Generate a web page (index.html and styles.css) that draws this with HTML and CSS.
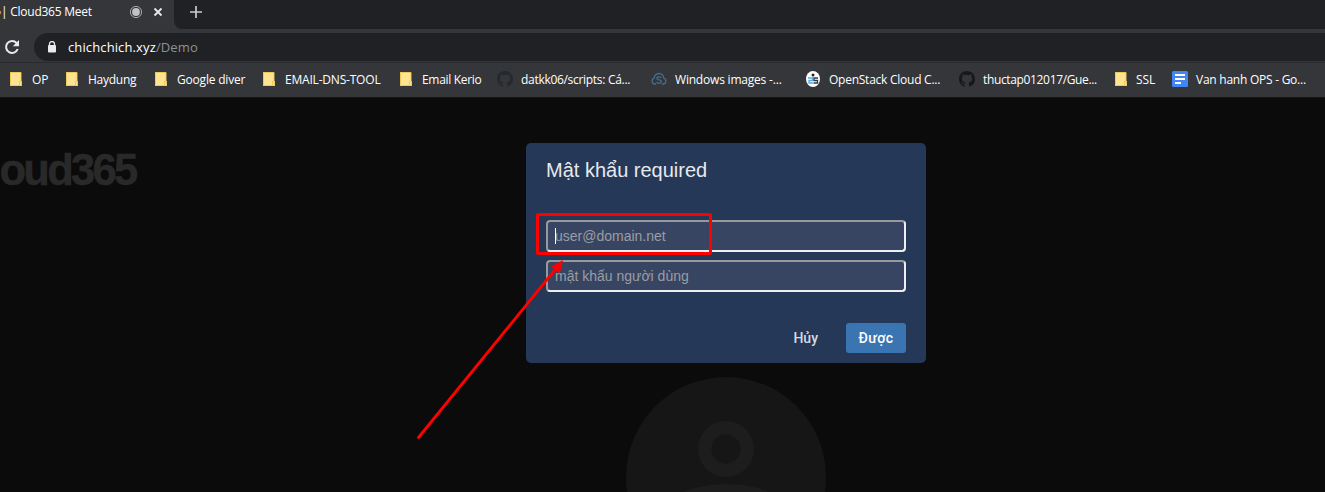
FILE: index.html
```html
<!DOCTYPE html>
<html lang="vi">
<head>
<meta charset="utf-8">
<title>Cloud365 Meet</title>
<link rel="stylesheet" href="styles.css">
</head>
<body>
<svg class="defs" width="0" height="0">
  <symbol id="folder" viewBox="0 0 16 16"><path d="M2 1h11v9h1v5H2z" fill="#fee391"/><path d="M2.500 1v13.500H11M2 1.500h11V10M11.500 14.500v-4h2v4z" fill="none" stroke="#eec859"/></symbol>
  <symbol id="github" viewBox="0 0 16 16"><path d="M8 0C3.580 0 0 3.580 0 8c0 3.540 2.290 6.530 5.470 7.590.4.070.550-.170.550-.380v-1.490c-2.010.370-2.530-.490-2.690-.940-.090-.230-.480-.940-.820-1.130-.280-.150-.680-.520-.010-.530.630-.010 1.080.580 1.230.820.720 1.210 1.870.870 2.330.660.070-.520.280-.870.510-1.070-1.780-.2-3.640-.890-3.640-3.950 0-.870.310-1.590.820-2.150-.080-.2-.360-1.020.080-2.120 0 0 .670-.210 2.200.820a7.600 7.600 0 0 1 4 0c1.530-1.040 2.200-.820 2.200-.820.440 1.100.160 1.920.080 2.120.510.560.820 1.270.820 2.150 0 3.070-1.870 3.750-3.650 3.950.290.250.540.730.540 1.480v2.200c0 .210.150.460.550.380A8 8 0 0 0 16 8c0-4.420-3.580-8-8-8z" fill="currentColor"/></symbol>
</svg>
<header class="browser">
  <div class="tabs">
    <div class="tab">
      <i class="favicon-edge"></i>
      <span class="tab-title">| Cloud365 Meet</span>
      <svg class="rec" width="14" height="14" viewBox="0 0 14 14"><circle cx="7" cy="7" r="5.600" fill="none" stroke="#a7a9ac"/><circle cx="7" cy="7" r="3.900" fill="#c0c2c5"/></svg>
      <svg class="close" width="10" height="10" viewBox="0 0 10 10"><path d="M1.500 1.500l7 7m0-7l-7 7" stroke="#e8eaed" stroke-width="1.800"/></svg>
    </div>
    <div class="tab-rest"><svg width="12" height="12" viewBox="0 0 12 12"><path d="M6 0v12M0 6h12" stroke="#c9cbce" stroke-width="1.700"/></svg></div>
  </div>
  <div class="toolbar">
    <svg class="reload" width="16" height="16" viewBox="0 0 16 16"><path d="M12.600 4A6 6 0 1 0 13.700 10" fill="none" stroke="#e8eaed" stroke-width="2"/><path d="M15 1v6.200H8.800z" fill="#e8eaed"/></svg>
    <div class="address">
      <svg width="10" height="12" viewBox="0 0 10 12"><path d="M2.500 5V3a2.500 2.500 0 0 1 5 0v2" fill="none" stroke="#e8eaed" stroke-width="1.300"/><rect x="1" y="4" width="8" height="7.500" rx="1" fill="#e8eaed"/></svg>
      <span class="url">chichchich.xyz<span class="path">/Demo</span></span>
    </div>
  </div>
  <nav class="bookmarks">
    <a><svg><use href="#folder"/></svg><span>OP</span></a>
    <a><svg><use href="#folder"/></svg><span class="haydung">Haydung</span></a>
    <a><svg><use href="#folder"/></svg><span class="diver">Google diver</span></a>
    <a><svg><use href="#folder"/></svg><span class="email">EMAIL-DNS-TOOL</span></a>
    <a><svg><use href="#folder"/></svg><span class="kerio">Email Kerio</span></a>
    <a><svg class="gh-dim"><use href="#github"/></svg><span class="scripts">datkk06/scripts: Cá...</span></a>
    <a><svg viewBox="0 0 16 16"><path d="M5 13H3.500a3 3 0 0 1-.3-5.800C3.200 4.500 5.500 2.500 8 2.500s4.600 2 4.800 4.700a3 3 0 0 1-.3 5.800H11M10.200 7C9.500 5.300 5.800 5.500 5.800 7.300c0 1.900 4.600 1.200 4.600 3.300S6.500 12.900 5.500 11" fill="none" stroke="#426f91" stroke-width="1.300"/></svg><span class="windows">Windows images -...</span></a>
    <a><svg viewBox="0 0 16 16"><ellipse cx="8" cy="8" rx="7" ry="8" fill="#fff"/><circle cx="8" cy="4" r="1.500" fill="#222"/><path d="M3 7h4.500v2.500H4V12h4" fill="none" stroke="#55a9df" stroke-width="1.300"/><path d="M13 7H9v2.500h3.500V12H8.500" fill="none" stroke="#333b42" stroke-width="1.300"/></svg><span class="openstack">OpenStack Cloud C...</span></a>
    <a><svg class="gh"><use href="#github"/></svg><span class="thuctap">thuctap012017/Gue...</span></a>
    <a><svg class="ssl"><use href="#folder"/></svg><span>SSL</span></a>
    <a><svg viewBox="0 0 16 16"><rect width="16" height="16" rx="1.500" fill="#4285f4"/><path d="M3 4h10M3 8h10M3 12h6" stroke="#fff" stroke-width="1.800"/></svg><span class="vanhanh">Van hanh OPS - Go...</span></a>
  </nav>
</header>
<main class="meet">
  <div class="brand">loud365</div>
  <section class="dialog">
    <h1>Mật khẩu required</h1>
    <div class="field"><i class="caret"></i>user@domain.net</div>
    <div class="field">mật khẩu người dùng</div>
    <div class="actions"><span class="cancel">Hủy</span><span class="ok">Được</span></div>
  </section>
  <svg class="avatar" width="200" height="115" viewBox="0 0 200 115"><circle cx="100" cy="100" r="100" fill="#161616"/><circle cx="100" cy="72" r="21.300" fill="none" stroke="#1d1d1d" stroke-width="13.300"/><ellipse cx="100" cy="148" rx="72" ry="41" fill="#1d1d1d"/></svg>
  <svg class="annotation" width="1325" height="394" viewBox="0 98 1325 394"><rect x="537.500" y="214.500" width="173" height="39" rx=".5" fill="none" stroke="#f00" stroke-width="3"/><path d="M418.500 437.500L554 271" stroke="#f00" stroke-width="2.800" stroke-linecap="round"/><path d="M563 260l-3.300 13.500-8.300-7z" fill="#f00"/></svg>
</main>
</body>
</html>
```
FILE: styles.css
```css
* { box-sizing: border-box; }
body { margin: 0; width: 1325px; height: 492px; overflow: hidden; background: #0b0b0b; font-family: "Open Sans", "Noto Sans", sans-serif; }
svg { display: block; flex: none; }
.defs { position: absolute; }
.browser { height: 98px; background: #35363a; border-bottom: 1px solid #151517; }
.tabs { display: flex; height: 29px; background: #35363a; }
.tab { display: flex; align-items: center; width: 174px; height: 29px; padding: 0 0 5px; color: #fff; font-size: 12px; }
.favicon-edge { width: 1px; height: 3px; background: #ef7c2d; }
.tab-title { width: 128px; padding-bottom: 1px; letter-spacing: -.25px; white-space: nowrap; }
.close { margin-left: 10px; }
.tab-rest { flex: 1; padding: 6px 0 0 16px; background: #202124; border-bottom-left-radius: 8px; }
.toolbar { display: flex; align-items: center; height: 36px; padding: 0 0 1px 4px; gap: 14px; }
.address { display: flex; align-items: center; flex: 1; height: 28px; padding-left: 13px; gap: 11px; background: #202124; border-radius: 14px 0 0 14px; }
.url { color: #fff; font-size: 13px; letter-spacing: .12px; }
.path { color: #8d9194; }
.bookmarks { display: grid; grid-template-columns: 56px 89px 108px 137px 99px 154px 154px 154px 153px 60px 145px; height: 33px; margin-top: -3px; padding: 0 0 0 8px; border-top: 1px solid #292a2d; }
.bookmarks a { display: flex; align-items: center; gap: 8px; color: #fff; font-size: 12px; white-space: nowrap; letter-spacing: -.1px; }
.bookmarks svg { width: 16px; height: 16px; }
.bookmarks .haydung { letter-spacing: -.25px; }
.bookmarks .diver, .bookmarks .email, .bookmarks .windows { letter-spacing: -.2px; }
.bookmarks .kerio { letter-spacing: -.32px; }
.bookmarks .scripts { letter-spacing: -.3px; }
.bookmarks .vanhanh { letter-spacing: -.25px; }
.bookmarks .openstack { letter-spacing: -.25px; }
.bookmarks .thuctap { letter-spacing: -.35px; }
.bookmarks .ssl { transform: translateX(1px); }
.gh-dim { color: #24292e; }
.gh { color: #17181a; }
.meet { position: relative; display: flex; flex-direction: column; align-items: center; height: 394px; background: #0b0b0b; }
.brand { position: absolute; left: -10px; top: 45px; color: #292929; font: bold 43.500px/54px "Liberation Sans", Arial, sans-serif; letter-spacing: -2.700px; -webkit-text-stroke: .5px #292929; }
.dialog { width: 400px; height: 220px; margin: 45px 0 14px 127px; padding: 15px 20px 10px; border-radius: 5px; background: #253858; font-family: "Liberation Sans", Arial, sans-serif; }
h1 { margin: 0 0 38px; color: #e6e9ee; font-size: 20px; line-height: 24px; font-weight: 400; }
.field { position: relative; height: 32px; margin-bottom: 8px; padding: 0 7px; border: 2px solid; border-color: #999 #eee #eee #999; border-radius: 4px; background: #374562; color: #9a9da3; font-size: 14px; line-height: 28px; }
.caret { position: absolute; left: 7px; top: 6px; width: 1px; height: 16px; background: #fff; }
.actions { display: flex; justify-content: flex-end; gap: 16px; margin-top: 31px; font: 500 14px/30px Roboto, sans-serif; }
.cancel { padding: 0 12px; color: #d6dbe2; }
.ok { width: 60px; border-radius: 3px; background: #3b75b1; color: #fff; text-align: center; letter-spacing: .4px; }
.avatar { margin-left: 127px; }
.annotation { position: absolute; left: 0; top: 0; }
```
